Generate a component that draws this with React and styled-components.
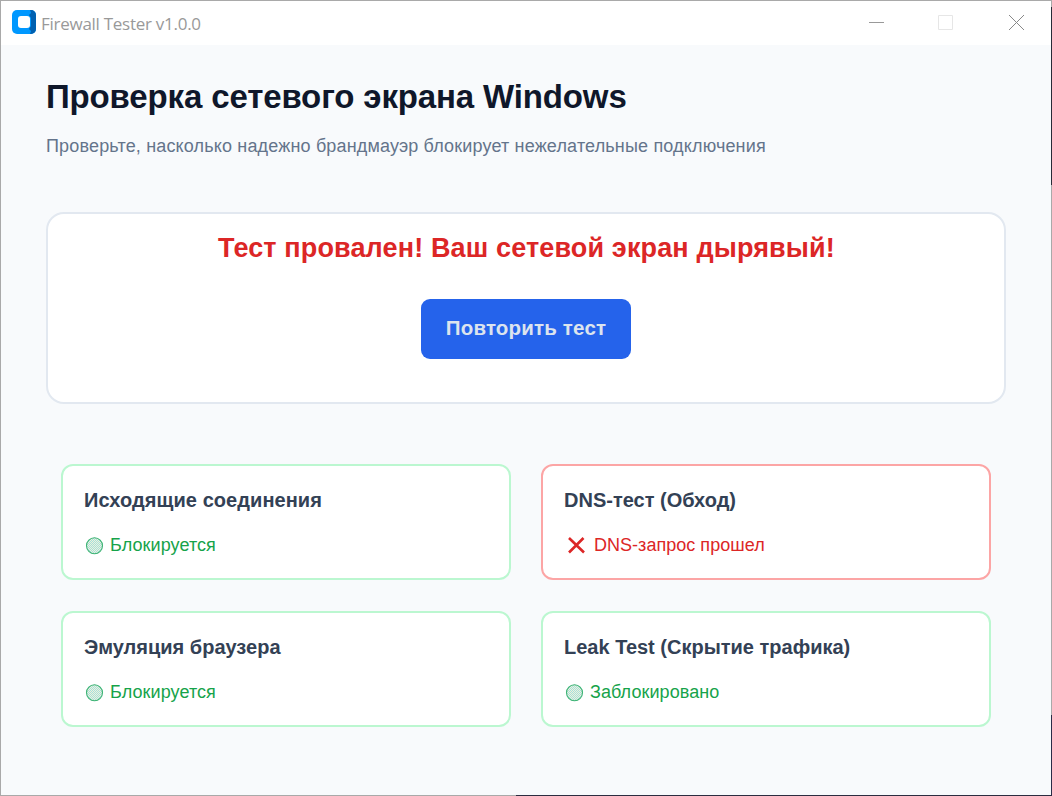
import React from "react";
import styled, { createGlobalStyle } from "styled-components";

const GlobalStyle = createGlobalStyle`
  *, *::before, *::after { box-sizing: border-box; }
  body { margin: 0; background: #a9a9a9; }
`;

const Window = styled.div`
  width: 1052px;
  height: 796px;
  padding: 1px;
  display: flex;
  flex-direction: column;
  overflow: hidden;
  font-family: "Liberation Sans", Arial, sans-serif;
  background:
    linear-gradient(#282c38, #282c38) 1051px 7px / 1px 178px no-repeat,
    linear-gradient(#2a2d48, #2a2d48) 1051px 715px / 1px 81px no-repeat,
    linear-gradient(#2c2c40, #2c2c40) 516px 795px / 536px 1px no-repeat,
    #a9a9a9;
`;

const TitleBar = styled.header`
  height: 44px;
  flex: none;
  display: flex;
  align-items: center;
  padding: 0 0 2px 11px;
  background: #fff;
`;

const AppTitle = styled.span`
  flex: 1;
  margin: 3px 0 0 5px;
  font: 17px/24px "Open Sans", "Noto Sans", sans-serif;
  letter-spacing: -0.27px;
  color: #999;
`;

const WindowButton = styled.button`
  width: 70px;
  height: 42px;
  padding: 0;
  border: 0;
  background: none;
  display: grid;
  place-items: center;
  svg { display: block; }
`;

const MaximizeButton = styled(WindowButton)`
  padding-right: 2px;
`;

const Content = styled.main`
  flex: 1;
  padding: 32px 45px 0;
  background: #f8fafc;
`;

const Heading = styled.h1`
  margin: 0;
  font-size: 33px;
  line-height: 40px;
  letter-spacing: -0.14px;
  white-space: nowrap;
  color: #0f172a;
`;

const Subtitle = styled.p`
  margin: 17px 0 0;
  font-size: 18px;
  line-height: 24px;
  letter-spacing: 0.16px;
  white-space: nowrap;
  color: #64748b;
`;

const ResultPanel = styled.section`
  height: 192px;
  margin-top: 54px;
  padding-top: 18px;
  display: flex;
  flex-direction: column;
  align-items: center;
  border: 2px solid #e2e8f0;
  border-radius: 18px;
  background: #fff;
`;

const Verdict = styled.h2`
  margin: 0;
  padding-left: 1px;
  font-size: 27px;
  line-height: 32px;
  letter-spacing: 0.14px;
  white-space: nowrap;
  color: #dc2626;
`;

const RetryButton = styled.button`
  width: 210px;
  height: 60px;
  margin-top: 35px;
  padding: 0 0 2px;
  border: 0;
  border-radius: 9px;
  background: #2563eb;
  color: #dce4ee;
  font: bold 20.5px/24px "Liberation Sans", Arial, sans-serif;
  letter-spacing: 0.17px;
  white-space: nowrap;
`;

const CardGrid = styled.section`
  display: grid;
  grid-template-columns: repeat(2, 450px);
  grid-auto-rows: 116px;
  gap: 31px 30px;
  margin: 60px 15px 0;
`;

const Card = styled.article`
  padding: 22px 21px 0;
  border: 2px solid ${(p) => (p.$failed ? "#fca5a5" : "#bbf7d0")};
  border-radius: 12px;
  background: #fff;
`;

const CardTitle = styled.h3`
  margin: 0;
  font-size: 20px;
  line-height: 24px;
  letter-spacing: ${(p) => p.$spacing || "0"};
  white-space: nowrap;
  color: #334155;
`;

const Status = styled.div`
  display: flex;
  align-items: center;
  gap: ${(p) => (p.$failed ? "8px" : "6px")};
  padding-left: ${(p) => (p.$failed ? "3px" : "1px")};
  margin-top: 21px;
  font-size: 18px;
  line-height: 24px;
  letter-spacing: ${(p) => (p.$failed ? "0.03px" : "0.08px")};
  white-space: nowrap;
  color: ${(p) => (p.$failed ? "#dc2626" : "#16a34a")};
`;

const AppIcon = () => (
  <svg width="24" height="24" viewBox="0 0 24 24">
    <rect width="24" height="24" rx="5" fill="#0098ff" />
    <path d="M19 0a5 5 0 0 1 5 5v14a5 5 0 0 1-5 5h-1l1-3-2-2 2-3V8l-2-3 2-2-1-3Z" fill="#0060b0" />
    <rect x="6" y="6" width="12" height="12" rx="3" fill="#fff" />
  </svg>
);

const BlockedIcon = ({ id }) => (
  <svg width="19" height="19" viewBox="0 0 19 19">
    <defs>
      <pattern id={id} width="2" height="2" patternUnits="userSpaceOnUse">
        <rect width="2" height="2" fill="#eef2dc" />
        <rect width="1" height="1" fill="#a6dfdc" />
        <rect x="1" y="1" width="1" height="1" fill="#a6dfdc" />
      </pattern>
    </defs>
    <circle cx="9.5" cy="9.7" r="8" fill={`url(#${id})`} stroke="#3bb273" strokeWidth="1.1" />
  </svg>
);

const CrossIcon = () => (
  <svg width="19" height="19" viewBox="0 0 19 19">
    <path d="M2 2 17 16.5M16.5 2 2 16.5" stroke="#dc2626" strokeWidth="2.6" fill="none" />
  </svg>
);

const CHECKS = [
  { id: "outgoing", title: "Исходящие соединения", status: "Блокируется", spacing: "0.06px" },
  { id: "dns", title: "DNS-тест (Обход)", status: "DNS-запрос прошел", failed: true },
  { id: "browser", title: "Эмуляция браузера", status: "Блокируется" },
  { id: "leak", title: "Leak Test (Скрытие трафика)", status: "Заблокировано" },
];

export default function App() {
  return (
    <>
      <GlobalStyle />
      <Window>
        <TitleBar>
          <AppIcon />
          <AppTitle>Firewall Tester v1.0.0</AppTitle>
          <WindowButton aria-label="Minimize">
            <svg width="15" height="15"><path d="M0 7.5h15" stroke="#999" /></svg>
          </WindowButton>
          <MaximizeButton aria-label="Maximize">
            <svg width="15" height="15"><path d="M.5.5h14v14H.5Z" stroke="#e6e6e6" fill="none" /></svg>
          </MaximizeButton>
          <WindowButton aria-label="Close">
            <svg width="15" height="15"><path d="m0 0 15 15M15 0 0 15" stroke="#888" /></svg>
          </WindowButton>
        </TitleBar>
        <Content>
          <Heading>Проверка сетевого экрана Windows</Heading>
          <Subtitle>Проверьте, насколько надежно брандмауэр блокирует нежелательные подключения</Subtitle>
          <ResultPanel>
            <Verdict>Тест провален! Ваш сетевой экран дырявый!</Verdict>
            <RetryButton>Повторить тест</RetryButton>
          </ResultPanel>
          <CardGrid>
            {CHECKS.map((check) => (
              <Card key={check.id} $failed={check.failed}>
                <CardTitle $spacing={check.spacing}>{check.title}</CardTitle>
                <Status $failed={check.failed}>
                  {check.failed ? <CrossIcon /> : <BlockedIcon id={`hatch-${check.id}`} />}
                  <span>{check.status}</span>
                </Status>
              </Card>
            ))}
          </CardGrid>
        </Content>
      </Window>
    </>
  );
}
